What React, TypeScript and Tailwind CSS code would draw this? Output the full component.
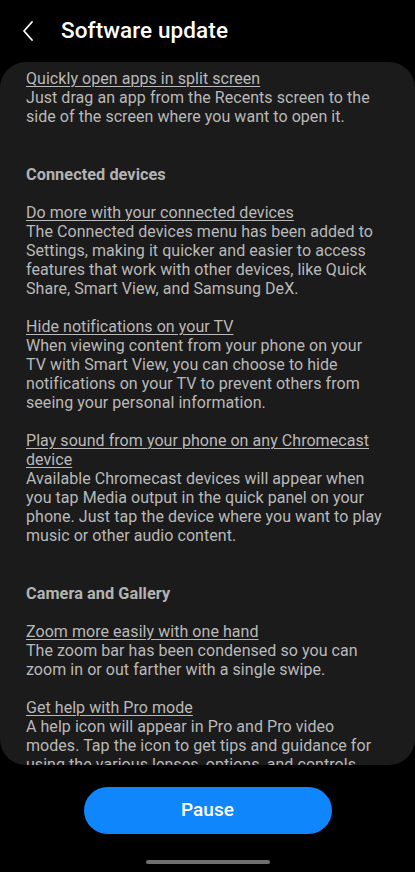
import React from 'react';

interface Item {
  title: string;
  body: string;
}

interface Section {
  heading?: string;
  items: Item[];
}

const sections: Section[] = [
  {
    items: [
      {
        title: 'Quickly open apps in split screen',
        body: 'Just drag an app from the Recents screen to the side of the screen where you want to open it.',
      },
    ],
  },
  {
    heading: 'Connected devices',
    items: [
      {
        title: 'Do more with your connected devices',
        body: 'The Connected devices menu has been added to Settings, making it quicker and easier to access features that work with other devices, like Quick Share, Smart View, and Samsung DeX.',
      },
      {
        title: 'Hide notifications on your TV',
        body: 'When viewing content from your phone on your TV with Smart View, you can choose to hide notifications on your TV to prevent others from seeing your personal information.',
      },
      {
        title: 'Play sound from your phone on any Chromecast device',
        body: 'Available Chromecast devices will appear when you tap Media output in the quick panel on your phone. Just tap the device where you want to play music or other audio content.',
      },
    ],
  },
  {
    heading: 'Camera and Gallery',
    items: [
      {
        title: 'Zoom more easily with one hand',
        body: 'The zoom bar has been condensed so you can zoom in or out farther with a single swipe.',
      },
      {
        title: 'Get help with Pro mode',
        body: 'A help icon will appear in Pro and Pro video modes. Tap the icon to get tips and guidance for using the various lenses, options, and controls.',
      },
    ],
  },
];

const App: React.FC = () => {
  return (
    <div
      className="w-[415px] h-[872px] bg-black flex flex-col overflow-hidden"
      style={{ fontFamily: "Roboto, 'Noto Sans', sans-serif" }}
    >
      {/* Header */}
      <div className="h-[62px] flex items-center pl-[20px] shrink-0">
        <svg width="18" height="22" viewBox="0 0 18 22" className="text-white">
          <path d="M12 2 L4 11 L12 20" fill="none" stroke="currentColor" strokeWidth="1.8" strokeLinecap="round" strokeLinejoin="round" />
        </svg>
        <h1 className="ml-[23px] text-[22.5px] font-medium text-white tracking-[0.1px]">Software update</h1>
      </div>

      {/* Release notes card */}
      <div className="h-[703px] shrink-0 bg-[#1b1b1b] rounded-[26px] overflow-hidden pl-[26px] pr-[31px] pt-[7px] text-[16px] leading-[19px] tracking-[0.05px] text-[#b9b9b9]">
        {sections.map((section, si) => (
          <div key={si} className={si > 0 ? 'mt-[39px]' : ''}>
            {section.heading && (
              <h2 className="font-bold text-[16.3px] text-[#b3b3b3] mb-[19px]">{section.heading}</h2>
            )}
            <div className="flex flex-col gap-[19px]">
              {section.items.map((item) => (
                <div key={item.title}>
                  <p className="underline underline-offset-[2px] decoration-[1px]">{item.title}</p>
                  <p>{item.body}</p>
                </div>
              ))}
            </div>
          </div>
        ))}
      </div>

      {/* Action */}
      <div className="flex justify-center mt-[22px]">
        <button className="w-[248px] h-[47px] rounded-full bg-[#0f86fc] text-white text-[19px] font-medium">
          Pause
        </button>
      </div>

      <div className="flex justify-center mt-[26px]">
        <div className="w-[124px] h-[4px] rounded-full bg-[#6f6f6f]" />
      </div>
    </div>
  );
};

export default App;
